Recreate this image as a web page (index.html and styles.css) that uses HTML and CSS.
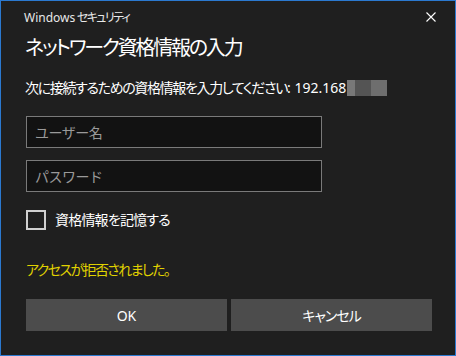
FILE: index.html
```html
<!DOCTYPE html>
<html lang="ja">
<head>
    <meta charset="UTF-8">
    <title>Windows セキュリティ</title>
    <link rel="stylesheet" href="styles.css">
</head>
<body>
    <div class="dialog">
        <div class="titlebar">
            <span class="app-name"><span class="latin">Windows</span> セキュリティ</span>
            <span class="close-btn">
                <svg width="10" height="10" viewBox="0 0 10 10">
                    <path d="M0.5 0.5 L9.5 9.5 M9.5 0.5 L0.5 9.5" stroke="#ffffff" stroke-width="1.1" fill="none"/>
                </svg>
            </span>
        </div>

        <div class="content">
            <h1>ネットワーク資格情報の入力</h1>
            <p class="desc">次に接続するための資格情報を入力してください<span class="latin">: 192.168</span><span class="masked"><span class="m1"></span><span class="m2"></span><span class="m3"></span></span></p>

            <input class="field first" type="text" placeholder="ユーザー名">
            <input class="field" type="password" placeholder="パスワード">

            <label class="remember">
                <span class="checkbox"></span>
                <span>資格情報を記憶する</span>
            </label>

            <p class="error">アクセスが拒否されました。</p>

            <div class="buttons">
                <button class="btn ok">OK</button>
                <button class="btn">キャンセル</button>
            </div>
        </div>
    </div>
</body>
</html>
```

FILE: styles.css
```css
body {
    margin: 0;
    background-color: #1f1f1f;
    font-family: "Noto Sans", "Noto Sans CJK JP", sans-serif;
    font-feature-settings: "palt";
    color: #ffffff;
}

.latin {
    letter-spacing: 0;
}

.dialog {
    width: 456px;
    height: 356px;
    box-sizing: border-box;
    border: 1px solid #2b79d0;
    background-color: #1f1f1f;
}

.titlebar {
    display: flex;
    justify-content: space-between;
    align-items: center;
    height: 31px;
    padding-left: 23px;
}

.app-name {
    font-size: 12px;
    letter-spacing: -1.6px;
    color: #e8e8e8;
}

.close-btn {
    width: 46px;
    height: 31px;
    display: flex;
    align-items: center;
    justify-content: center;
    margin-right: 1px;
}

.content {
    padding: 0 23px 0 24px;
}

h1 {
    margin: 2px 0 0;
    font-size: 20px;
    font-weight: normal;
    line-height: 28px;
    letter-spacing: -2.2px;
    color: #ffffff;
}

.desc {
    margin: 16px 0 0;
    font-size: 14px;
    line-height: 20px;
    letter-spacing: -1.35px;
    color: #ffffff;
    display: flex;
    align-items: center;
}

.masked {
    display: inline-flex;
    height: 16px;
    margin-left: 1px;
}

.m1 { width: 8px; background: #787878; }
.m2 { width: 16px; background: #545454; }
.m3 { width: 16px; background: #6e6e6e; }

.field {
    display: block;
    width: 296px;
    height: 32px;
    box-sizing: border-box;
    margin: 12px 0 0 1px;
    padding: 0 8px;
    background-color: #121212;
    border: 1px solid #7a7a7a;
    color: #ffffff;
    font-family: inherit;
    font-size: 14px;
    letter-spacing: -0.5px;
    outline: none;
}

.field.first {
    margin-top: 18px;
}

.field::placeholder {
    color: #9a9a9a;
}

.remember {
    display: flex;
    align-items: center;
    margin: 18px 0 0 1px;
    font-size: 14px;
    line-height: 20px;
    letter-spacing: -0.8px;
    color: #ffffff;
}

.checkbox {
    width: 20px;
    height: 20px;
    box-sizing: border-box;
    border: 2px solid #d0d0d0;
    margin-right: 9px;
}

.error {
    margin: 30px 0 0 1px;
    font-size: 14px;
    line-height: 20px;
    letter-spacing: -1.6px;
    color: #e0d200;
}

.buttons {
    display: flex;
    gap: 4px;
    margin: 19px 0 0 1px;
}

.btn {
    width: 201px;
    height: 32px;
    border: none;
    background-color: #4c4c4c;
    color: #ffffff;
    font-family: inherit;
    font-size: 14px;
    font-feature-settings: "palt";
    letter-spacing: -1px;
}

.btn.ok {
    letter-spacing: 0;
}
```
